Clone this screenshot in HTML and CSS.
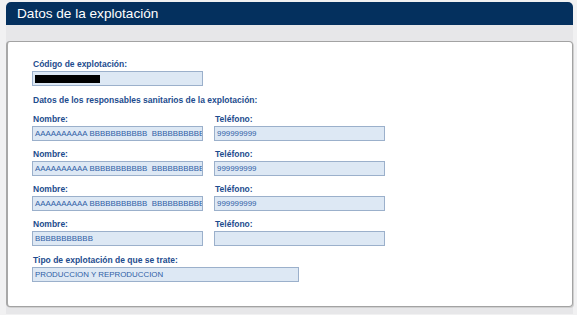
FILE: index.html
```html
<!DOCTYPE html>
<html lang="es">
<head>
<meta charset="utf-8">
<title>Datos de la explotación</title>
<link rel="stylesheet" href="styles.css">
</head>
<body>
<div class="frame">
  <div class="header"><h1 class="title">Datos de la explotación</h1></div>
  <div class="box">
    <div class="panel">
      <div class="field">
        <div class="label">Código de explotación:</div>
        <div class="input w-half"><span class="redacted"></span></div>
      </div>
      <div class="section">Datos de los responsables sanitarios de la explotación:</div>
      <div class="grid">
        <div class="field">
          <div class="label">Nombre:</div>
          <div class="input">AAAAAAAAAA BBBBBBBBBBB&nbsp; BBBBBBBBBB</div>
        </div>
        <div class="field">
          <div class="label">Teléfono:</div>
          <div class="input">999999999</div>
        </div>
        <div class="field">
          <div class="label">Nombre:</div>
          <div class="input">AAAAAAAAAA BBBBBBBBBBB&nbsp; BBBBBBBBBB</div>
        </div>
        <div class="field">
          <div class="label">Teléfono:</div>
          <div class="input">999999999</div>
        </div>
        <div class="field">
          <div class="label">Nombre:</div>
          <div class="input">AAAAAAAAAA BBBBBBBBBBB&nbsp; BBBBBBBBBB</div>
        </div>
        <div class="field">
          <div class="label">Teléfono:</div>
          <div class="input">999999999</div>
        </div>
        <div class="field">
          <div class="label">Nombre:</div>
          <div class="input">BBBBBBBBBBB</div>
        </div>
        <div class="field">
          <div class="label">Teléfono:</div>
          <div class="input"></div>
        </div>
      </div>
      <div class="field last">
        <div class="label">Tipo de explotación de que se trate:</div>
        <div class="input w-wide">PRODUCCION Y REPRODUCCION</div>
      </div>
    </div>
  </div>
</div>
</body>
</html>
```

FILE: styles.css
```css
html, body {
  margin: 0;
  padding: 0;
}
body {
  background: #f1f1f2;
  font-family: "Liberation Sans", Arial, sans-serif;
  width: 577px;
  height: 315px;
  overflow: hidden;
}
.frame {
  margin: 2px 0 0 6px;
  width: 567px;
}
.header {
  height: 23px;
  background: #04305e;
  border-radius: 5px 5px 0 0;
  display: flex;
  align-items: center;
  padding-left: 11px;
}
.title {
  margin: 0;
  color: #ffffff;
  font-size: 13.6px;
  font-weight: normal;
  line-height: 16px;
  padding-top: 1px;
}
.box {
  background: #e7e7e9;
  padding-top: 16px;
  padding-bottom: 7px;
}
.panel {
  background: #ffffff;
  border: 1px solid #a3a3a3;
  border-left: 2px solid #a8a8a8;
  border-radius: 4px;
  height: 247px;
  padding: 17px 0 0 24px;
  box-shadow: 1px 1px 0 #d0d0d0;
}
.label,
.section {
  color: #1d4c8e;
  font-weight: bold;
  font-size: 8.5px;
  line-height: 10px;
}
.section {
  margin: 9px 0 9px 1px;
}
.label {
  margin-left: 1px;
  margin-bottom: 2px;
}
.input {
  box-sizing: border-box;
  height: 15px;
  width: 171px;
  background: #dde8f4;
  border: 1px solid #9bb0cb;
  color: #2f5ea6;
  font-size: 7.9px;
  line-height: 13px;
  padding-left: 2px;
  white-space: nowrap;
  overflow: hidden;
  display: flex;
  align-items: center;
}
.w-wide {
  width: 267px;
}
.redacted {
  display: inline-block;
  width: 65px;
  height: 8px;
  background: #000000;
}
.grid {
  display: grid;
  grid-template-columns: 171px 171px;
  column-gap: 11px;
  row-gap: 8px;
}
.last {
  margin-top: 9px;
}
```
